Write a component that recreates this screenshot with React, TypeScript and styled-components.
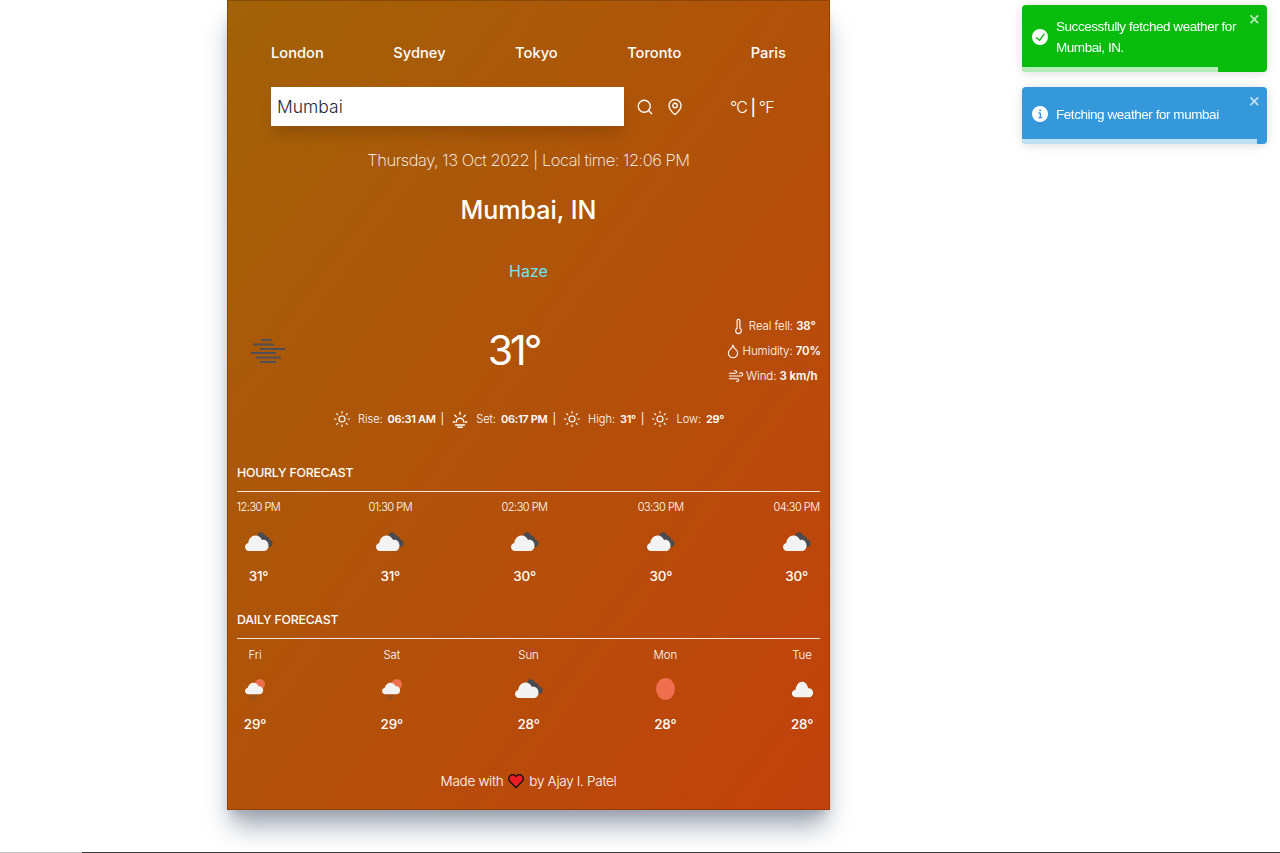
import styled, { createGlobalStyle } from "styled-components";
import { Search, MapPin, Thermometer, Droplet, Wind, Sun } from "lucide-react";

const GlobalStyle = createGlobalStyle`
  html, body {
    margin: 0;
    padding: 0;
    background: #ffffff;
    overflow: hidden;
  }
  body {
    font-family: Inter, "Noto Sans", sans-serif;
    color: #ffffff;
  }
  * {
    box-sizing: border-box;
  }
`;

const Page = styled.div`
  height: 853px;
  padding-left: 227px;
`;

const Card = styled.main`
  width: 603px;
  height: 810px;
  padding: 0 10px;
  background: linear-gradient(to bottom right, #a16207, #c2410c);
  box-shadow: inset 0 0 0 1px rgba(80, 40, 0, 0.35), 0 20px 25px -5px #9ca3af, 0 8px 10px -6px #9ca3af;
`;

const TopNav = styled.nav`
  display: flex;
  justify-content: space-between;
  height: 87px;
  padding: 43px 34px 0;
`;

const NavLink = styled.button`
  height: 20px;
  padding: 0;
  border: 0;
  background: none;
  color: #ffffff;
  font: 500 14.7px/20px Inter, sans-serif;
`;

const SearchRow = styled.div`
  display: flex;
  align-items: center;
  height: 39px;
  padding-left: 34px;
`;

const SearchInput = styled.div`
  width: 353px;
  height: 39px;
  padding-left: 6px;
  background: #ffffff;
  color: #1f2937;
  font: 300 17.5px/39px Inter, sans-serif;
  box-shadow: 0 10px 15px -3px rgba(0, 0, 0, 0.15);
`;

const SearchIcons = styled.div`
  display: flex;
  align-items: center;
  gap: 12px;
  margin-left: 12px;
`;

const Units = styled.div`
  margin-left: 46px;
  letter-spacing: -0.9px;
  font: 300 16px/20px Inter, sans-serif;

  b {
    font-weight: 500;
  }
`;

const DateLine = styled.p`
  margin: 22px 0 0;
  text-align: center;
  letter-spacing: -0.45px;
  font: 200 16.5px/24px Inter, sans-serif;
`;

const City = styled.h1`
  margin: 22px 0 0;
  text-align: center;
  font: 500 25px/32px Inter, sans-serif;
`;

const Condition = styled.p`
  margin: 33px 0 0;
  text-align: center;
  color: #67e8f9;
  font: 400 16px/24px Inter, sans-serif;
`;

const CurrentRow = styled.section`
  display: grid;
  grid-template-columns: 1fr auto 1fr;
  align-items: center;
  height: 72px;
  margin-top: 32px;
  padding-left: 14px;
`;

const Degrees = styled.div`
  margin: -2px 0 0 -44px;
  letter-spacing: -3px;
  font: 400 41px/56px Inter, sans-serif;
`;

const Details = styled.ul`
  display: flex;
  flex-direction: column;
  align-items: center;
  justify-self: end;
  gap: 7px;
  margin: 0 -1px 0 0;
  padding: 0;
  list-style: none;
`;

const Detail = styled.li`
  display: flex;
  align-items: center;
  gap: 2px;
  height: 18px;
  white-space: nowrap;
  letter-spacing: -0.1px;
  font: 300 11.5px/18px Inter, sans-serif;

  b {
    font-weight: 600;
  }
`;

const SunRow = styled.div`
  display: flex;
  justify-content: center;
  align-items: center;
  gap: 5px;
  height: 20px;
  margin-top: 22px;
  font: 300 11px/20px Inter, sans-serif;

  b {
    font-weight: 600;
    letter-spacing: -0.3px;
  }
`;

const SunLabel = styled.span`
  margin-left: 2px;
`;

const Divider = styled.span`
  margin: 0 2px 0 0;
  font-weight: 400;
`;

const Forecast = styled.section<{ $top: number }>`
  margin-top: ${(p) => p.$top}px;
`;

const ForecastTitle = styled.h2`
  height: 31px;
  margin: 0;
  padding-top: 2px;
  border-bottom: 1px solid rgba(255, 255, 255, 0.85);
  letter-spacing: -0.2px;
  font: 500 12.3px/20px Inter, sans-serif;
`;

const ForecastRow = styled.div<{ $gap: number }>`
  display: flex;
  justify-content: space-between;
  margin-top: ${(p) => p.$gap}px;
`;

const ForecastItem = styled.div<{ $width: number }>`
  display: flex;
  flex-direction: column;
  align-items: center;
  width: ${(p) => p.$width}px;
`;

const ItemLabel = styled.span`
  letter-spacing: -0.1px;
  font: 300 11.5px/18px Inter, sans-serif;
  white-space: nowrap;
`;

const TimeLabel = styled(ItemLabel)`
  letter-spacing: -0.5px;
  font-size: 11px;
`;

const IconSlot = styled.div<{ $lift?: number }>`
  display: flex;
  justify-content: center;
  align-items: center;
  height: 48px;
  width: 48px;
  margin-top: 2px;
  padding-bottom: ${(p) => p.$lift ?? 0}px;
`;

const ItemTemp = styled.span`
  font: 500 13.5px/20px Inter, sans-serif;
  letter-spacing: -0.2px;
`;

const Footer = styled.footer`
  display: flex;
  justify-content: center;
  align-items: center;
  gap: 5px;
  margin-top: 36px;
  letter-spacing: -0.3px;
  font: 300 13.5px/22px Inter, sans-serif;
`;

const ToastStack = styled.div`
  position: fixed;
  top: 5px;
  left: 1022px;
  width: 245px;
  display: flex;
  flex-direction: column;
  gap: 15px;
`;

const Toast = styled.div<{ $bg: string; $height: number }>`
  position: relative;
  display: flex;
  align-items: center;
  gap: 8px;
  height: ${(p) => p.$height}px;
  padding: 0 24px 3px 10px;
  overflow: hidden;
  border-radius: 4px;
  background: ${(p) => p.$bg};
  color: #ffffff;
  letter-spacing: -0.45px;
  font: 400 13.5px/21px "Liberation Sans", Arial, sans-serif;
  box-shadow: 0 1px 10px 0 rgba(0, 0, 0, 0.1), 0 2px 15px 0 rgba(0, 0, 0, 0.05);
`;

const ToastIcon = styled.svg`
  flex: none;
  width: 16px;
  height: 16px;
  fill: #ffffff;
`;

const ToastClose = styled.svg`
  position: absolute;
  top: 6px;
  right: 6px;
  width: 12px;
  height: 16px;
  fill: #ffffff;
  opacity: 0.7;
`;

const ToastProgress = styled.div`
  position: absolute;
  left: 0;
  bottom: 0;
  height: 5px;
  background: rgba(255, 255, 255, 0.7);
`;

const BottomEdge = styled.div`
  position: fixed;
  left: 0;
  right: 0;
  bottom: 0;
  height: 1px;
  background: linear-gradient(to right, #c4c4c4 82px, #3a3a3a 82px);
`;

const BrokenClouds = () => (
  <svg width="28" height="20" viewBox="0 0 28 20">
    <g fill="#4b4b4f">
      <circle cx="15.700" cy="3.500" r="3.200" />
      <circle cx="20.700" cy="7.500" r="3.300" />
      <circle cx="24.300" cy="11.200" r="3.200" />
      <path d="M13 3l5-2 8 8 1 5-4 1z" />
    </g>
    <path
      d="M4 19C1.800 19 0 17.200 0 15c0-2 1.400-3.600 3.300-4C3.600 6.800 6.700 3.500 10.500 3.500c3 0 5.500 1.900 6.500 4.500.5-.1.900-.2 1.400-.2 3 0 5.100 2.500 5.100 5.600S21.500 19 18.500 19z"
      fill="#f3f3f3"
    />
  </svg>
);

const RainSun = () => (
  <svg width="20" height="23" viewBox="0 0 21 23">
    <circle cx="15.500" cy="6" r="5.500" fill="#ee6e4d" />
    <path
      d="M3.500 16.500C1.600 16.500 0 15 0 13.200c0-1.600 1.200-3 2.800-3.200C3.400 7.400 5.500 4.500 9 4.500c2.500 0 4.400 1.500 5.100 3.600.4-.1.700-.1 1-.1 2.200 0 4 1.800 4 4.200s-1.800 4.300-4 4.300z"
      fill="#f3f3f3"
    />
    <path d="M6 17.500l-.6 2M9 17.500l-.6 2M12 17.500l-.6 2M7.500 20l-.4 2M10.500 20l-.4 2" stroke="#555" strokeWidth="0.8" />
  </svg>
);

const FullSun = () => (
  <svg width="19" height="22" viewBox="0 0 19 22">
    <ellipse cx="9.500" cy="11" rx="9.500" ry="11" fill="#ee6e4d" />
  </svg>
);

const PlainCloud = () => (
  <svg width="23" height="17" viewBox="0 0 32 24">
    <path
      d="M7 23c-3.300 0-6-2.400-6-5.400 0-2.800 2.300-5.100 5.200-5.400C7 6 10.800 1 15.500 1c4 0 7.400 3.600 8.400 9.200.4-.1.800-.1 1.200-.1 3.300 0 5.900 2.900 5.900 6.500S28.400 23 25.100 23z"
      fill="#f3f3f3"
    />
  </svg>
);

const Fog = () => (
  <svg width="34" height="24" viewBox="0 0 34 24" stroke="#4f4f55" strokeWidth="2">
    <path d="M10 1h11M2 5.500h21M9 10h25M0 14h25M5 18.500h25M9 23h16" />
  </svg>
);

const Sunset = () => (
  <svg width="18" height="18" viewBox="0 0 24 24" fill="none" stroke="#fff" strokeWidth="1.800" strokeLinecap="round">
    <path d="M7 16a5 5 0 0 1 10 0M3 16h2M19 16h2M6 20h12M9 23h6M12 3v3M5 7l2 2M19 7l-2 2" />
  </svg>
);

const Heart = () => (
  <svg width="16" height="16" viewBox="0 0 24 24">
    <path
      d="M12 22 2.800 12.800C.4 10.400.4 6.600 2.800 4.300c2.300-2.300 6-2.300 8.300 0l.9.900.9-.9c2.300-2.300 6-2.300 8.300 0 2.400 2.300 2.400 6.100 0 8.500z"
      fill="#ee1c25"
      stroke="#111"
      strokeWidth="2"
    />
  </svg>
);

const hourly = [
  { label: "12:30 PM", temp: "31°", w: 43 },
  { label: "01:30 PM", temp: "31°", w: 43 },
  { label: "02:30 PM", temp: "30°", w: 48 },
  { label: "03:30 PM", temp: "30°", w: 47 },
  { label: "04:30 PM", temp: "30°", w: 47 },
];

const daily = [
  { label: "Fri", temp: "29°", icon: <RainSun /> },
  { label: "Sat", temp: "29°", icon: <RainSun /> },
  { label: "Sun", temp: "28°", icon: <BrokenClouds /> },
  { label: "Mon", temp: "28°", icon: <FullSun /> },
  { label: "Tue", temp: "28°", icon: <PlainCloud /> },
];

const CHECK =
  "M12 0a12 12 0 1012 12A12.014 12.014 0 0012 0zm6.927 8.2l-6.845 9.289a1.011 1.011 0 01-1.43.188l-4.888-3.908a1 1 0 111.25-1.562l4.076 3.261 6.227-8.451a1 1 0 111.61 1.183z";
const INFO =
  "M12 0a12 12 0 1012 12A12.013 12.013 0 0012 0zm.25 5a1.5 1.5 0 11-1.5 1.5 1.5 1.5 0 011.5-1.5zm2.25 13.5h-4a1 1 0 010-2h.75a.25.25 0 00.25-.25v-4.5a.25.25 0 00-.25-.25h-.75a1 1 0 010-2h1a2 2 0 012 2v4.75a.25.25 0 00.25.25h.75a1 1 0 110 2z";
const CLOSE =
  "M7.710 8.230l3.750 3.750-1.480 1.480-3.750-3.750-3.750 3.750L1 11.980l3.750-3.750L1 4.480 2.480 3l3.750 3.750L9.980 3l1.480 1.480-3.750 3.750z";

const App = () => {
  return (
    <Page>
      <GlobalStyle />
      <Card>
        <TopNav>
          {["London", "Sydney", "Tokyo", "Toronto", "Paris"].map((c) => (
            <NavLink key={c}>{c}</NavLink>
          ))}
        </TopNav>

        <SearchRow>
          <SearchInput>Mumbai</SearchInput>
          <SearchIcons>
            <Search size={18} strokeWidth={1.7} />
            <MapPin size={18} strokeWidth={1.7} />
          </SearchIcons>
          <Units>
            °C <b>|</b> °F
          </Units>
        </SearchRow>

        <DateLine>Thursday, 13 Oct 2022 | Local time: 12:06 PM</DateLine>
        <City>Mumbai, IN</City>
        <Condition>Haze</Condition>

        <CurrentRow>
          <Fog />
          <Degrees>31°</Degrees>
          <Details>
            <Detail>
              <Thermometer size={17} strokeWidth={1.6} />
              <span>
                Real fell: <b>38°</b>
              </span>
            </Detail>
            <Detail>
              <Droplet size={16} strokeWidth={1.6} />
              <span>
                Humidity: <b>70%</b>
              </span>
            </Detail>
            <Detail>
              <Wind size={16} strokeWidth={1.6} />
              <span>
                Wind: <b>3 km/h</b>
              </span>
            </Detail>
          </Details>
        </CurrentRow>

        <SunRow>
          <Sun size={18} strokeWidth={1.5} />
          <SunLabel>Rise:</SunLabel> <b>06:31 AM</b>
          <Divider>|</Divider>
          <Sunset />
          <SunLabel>Set:</SunLabel> <b>06:17 PM</b>
          <Divider>|</Divider>
          <Sun size={18} strokeWidth={1.5} />
          <SunLabel>High:</SunLabel> <b>31°</b>
          <Divider>|</Divider>
          <Sun size={18} strokeWidth={1.5} />
          <SunLabel>Low:</SunLabel> <b>29°</b>
        </SunRow>

        <Forecast $top={32}>
          <ForecastTitle>HOURLY FORECAST</ForecastTitle>
          <ForecastRow $gap={6}>
            {hourly.map((h) => (
              <ForecastItem key={h.label} $width={h.w}>
                <TimeLabel>{h.label}</TimeLabel>
                <IconSlot>
                  <BrokenClouds />
                </IconSlot>
                <ItemTemp>{h.temp}</ItemTemp>
              </ForecastItem>
            ))}
          </ForecastRow>
        </Forecast>

        <Forecast $top={22}>
          <ForecastTitle>DAILY FORECAST</ForecastTitle>
          <ForecastRow $gap={7}>
            {daily.map((d) => (
              <ForecastItem key={d.label} $width={36}>
                <ItemLabel>{d.label}</ItemLabel>
                <IconSlot $lift={2}>{d.icon}</IconSlot>
                <ItemTemp>{d.temp}</ItemTemp>
              </ForecastItem>
            ))}
          </ForecastRow>
        </Forecast>

        <Footer>
          Made with <Heart /> by Ajay I. Patel
        </Footer>
      </Card>

      <ToastStack>
        <Toast $bg="#07bc0c" $height={67}>
          <ToastIcon viewBox="0 0 24 24">
            <path d={CHECK} />
          </ToastIcon>
          <span>Successfully fetched weather for Mumbai, IN.</span>
          <ToastClose viewBox="0 0 14 16">
            <path d={CLOSE} />
          </ToastClose>
          <ToastProgress style={{ width: "80%" }} />
        </Toast>
        <Toast $bg="#3498db" $height={57}>
          <ToastIcon viewBox="0 0 24 24">
            <path d={INFO} />
          </ToastIcon>
          <span>Fetching weather for mumbai</span>
          <ToastClose viewBox="0 0 14 16">
            <path d={CLOSE} />
          </ToastClose>
          <ToastProgress style={{ width: "96%" }} />
        </Toast>
      </ToastStack>
      <BottomEdge />
    </Page>
  );
};

export default App;
